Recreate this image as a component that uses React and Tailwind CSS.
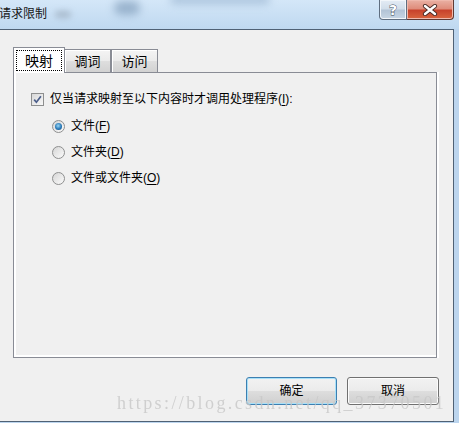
import React from 'react';

const Radio = ({ checked }) => (
    <span className="flex h-[13px] w-[13px] shrink-0 items-center justify-center rounded-full border border-[#8e8f8f] bg-gradient-to-br from-[#d6d6d6] to-[#fbfbfb]">
        {checked && (
            <span className="h-[7px] w-[7px] rounded-full bg-[radial-gradient(circle_at_45%_40%,#9ad8f5_0%,#2a79b8_55%,#0f4778_100%)]" />
        )}
    </span>
);

const Checkbox = () => (
    <span className="flex h-[13px] w-[13px] shrink-0 items-center justify-center border border-[#8e8f8f] bg-gradient-to-br from-[#d8d8d8] to-[#f8f8f8]">
        <svg width="9" height="9" viewBox="0 0 9 9">
            <path d="M1.2 4.6 L3.4 7.2 L7.9 1.2" stroke="#4b5e8a" strokeWidth="1.7" fill="none" />
        </svg>
    </span>
);

const WinButton = ({ children, focused }) => (
    <button
        className={
            focused
                ? 'flex h-[28px] w-[91px] items-center justify-center rounded-[3px] border border-[#3c7fb1] bg-[linear-gradient(#f2f2f2_0%,#ebebeb_48%,#dddddd_52%,#cfcfcf_100%)] text-[12px] leading-none text-black shadow-[inset_0_0_0_1px_#a8e0f8]'
                : 'flex h-[28px] w-[92px] items-center justify-center rounded-[3px] border border-[#707070] bg-[linear-gradient(#f2f2f2_0%,#ebebeb_48%,#dddddd_52%,#cfcfcf_100%)] text-[12px] leading-none text-black shadow-[inset_0_0_0_1px_#fcfcfc]'
        }
    >
        {children}
    </button>
);

const RadioRow = ({ checked, label, hotkey }) => (
    <div className="flex h-[14px] items-center gap-[6px]">
        <Radio checked={checked} />
        <span className="leading-none">
            {label}(<span className="underline underline-offset-2">{hotkey}</span>)
        </span>
    </div>
);

export default function App() {
    return (
        <div className="relative flex h-[423px] w-[459px] flex-col overflow-hidden bg-[#bcd5ee] font-[Liberation_Sans,Noto_Sans_CJK_SC,sans-serif] text-[12px] text-black">
            {/* title bar */}
            <div className="relative flex h-[29px] items-center bg-gradient-to-b from-[#d4e7f8] to-[#bfd8f0]">
                <div className="absolute left-[55px] top-[11px] h-[7px] w-[16px] rounded-full bg-[#9aaabb] opacity-70 blur-[3px]" />
                <div className="absolute left-[114px] top-[1px] h-[14px] w-[26px] rounded-full bg-[#7593b2] opacity-60 blur-[4px]" />
                <div className="absolute left-[170px] top-[-5px] h-[9px] w-[100px] rounded-full bg-[#8eabc9] opacity-60 blur-[4px]" />
                <span className="relative -ml-px pb-[1px] text-[12px] leading-none text-[#161616]">请求限制</span>
                <div className="relative ml-auto mr-[5px] flex h-[20px] self-start">
                    <div className="flex w-[28px] items-center justify-center rounded-bl-[4px] border border-t-0 border-[#5f6e80] bg-[linear-gradient(#e4ecf5_0%,#d2deea_45%,#b3c4d6_55%,#c8d6e4_100%)] shadow-[inset_0_0_0_1px_#f2f6fa]">
                        <span className="font-[DejaVu_Sans,sans-serif] text-[14px] font-bold leading-none text-white [-webkit-text-stroke:0.8px_#3b4654] [paint-order:stroke_fill]">?</span>
                    </div>
                    <div className="flex w-[47px] items-center justify-center rounded-br-[4px] border border-l-0 border-t-0 border-[#5f3a34] bg-[linear-gradient(#eab1a4_0%,#df8d7c_45%,#c8432c_55%,#d9663f_100%)] shadow-[inset_0_0_0_1px_#efb9ad]">
                        <svg width="16" height="12" viewBox="0 0 16 12">
                            <path d="M3 2 L13 10 M13 2 L3 10" stroke="#4a2a24" strokeWidth="4.2" strokeLinecap="round" />
                            <path d="M3 2 L13 10 M13 2 L3 10" stroke="#ffffff" strokeWidth="2.4" strokeLinecap="round" />
                        </svg>
                    </div>
                </div>
            </div>

            {/* client area */}
            <div className="flex h-[393px]">
                <div className="flex w-[454px] flex-col border-y border-r border-[#4f6175] bg-[#f0f0f0] pt-[17px]">
                    {/* tabs */}
                    <div className="ml-[13px] flex h-[25px] items-end">
                        <div className="relative z-10 -mb-px flex h-[26px] w-[52px] items-start border-x border-t border-[#898c95] bg-white px-[2px] pt-[2px]">
                            <div className="flex h-[21px] w-full items-center justify-center border border-dotted border-black">
                                <span className="text-[14px] leading-none">映射</span>
                            </div>
                        </div>
                        <div className="-ml-px flex h-[23px] w-[47px] items-center justify-center border-x border-t border-[#898c95] bg-[linear-gradient(#f4f4f4_0%,#ebebeb_48%,#dedede_52%,#d2d2d2_100%)] shadow-[inset_1px_1px_0_#ffffff]">
                            <span className="text-[13px] leading-none">调词</span>
                        </div>
                        <div className="flex h-[23px] w-[47px] items-center justify-center border-x border-t border-[#898c95] bg-[linear-gradient(#f4f4f4_0%,#ebebeb_48%,#dedede_52%,#d2d2d2_100%)] shadow-[inset_1px_1px_0_#ffffff]">
                            <span className="text-[13px] leading-none">访问</span>
                        </div>
                    </div>

                    {/* panel */}
                    <div className="ml-[13px] flex h-[286px] w-[424px] flex-col border border-[#898c95] pl-[17px] pt-[19px] shadow-[inset_2px_-2px_0_#ffffff,2px_0_0_#ffffff]">
                        <div className="flex h-[14px] items-center gap-[6px]">
                            <Checkbox />
                            <span className="leading-none">
                                仅当请求映射至以下内容时才调用处理程序(<span className="underline underline-offset-2">I</span>):
                            </span>
                        </div>
                        <div className="mt-[13px] flex flex-col gap-[12px] pl-[21px]">
                            <RadioRow checked label="文件" hotkey="F" />
                            <RadioRow label="文件夹" hotkey="D" />
                            <RadioRow label="文件或文件夹" hotkey="O" />
                        </div>
                    </div>

                    {/* buttons */}
                    <div className="mt-[19px] flex justify-end gap-[10px] pr-[14px]">
                        <WinButton focused>确定</WinButton>
                        <WinButton>取消</WinButton>
                    </div>
                </div>
            </div>
            <div className="h-px" />

            {/* watermark */}
            <div className="pointer-events-none absolute left-[117px] top-[394px] whitespace-nowrap font-[Liberation_Serif,serif] text-[18px] leading-[18px] tracking-[2.4px] text-[#c8c8c8] opacity-80">
                https://blog.csdn.net/qq_37370501
            </div>
        </div>
    );
}
